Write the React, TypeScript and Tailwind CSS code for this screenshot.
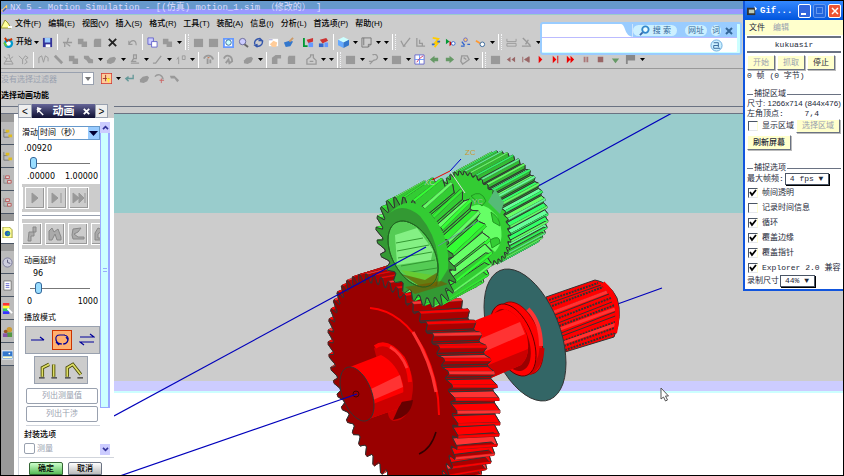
import { useState } from "react";
import type { ReactNode } from "react";

const MENUS = ["文件(F)", "编辑(E)", "视图(V)", "插入(S)", "格式(R)", "工具(T)", "装配(A)", "信息(I)", "分析(L)", "首选项(P)", "帮助(H)"];

// "|" separator, "_" small gap, "v" caret, ":" group handle, anything else is a glyph
const STANDARD_BAR = [
  "app", "开始", "v", "save", "|", "cut", "copy", "paste", "delete", "_", "undo", "|", "copyBlue", "copy", "v", ":",
  "square", "square", "fit", "zoom", "rotate", "pan", "shade", "_", "assembly", "assembly2", "|", "cube", "v", "frame", "v", "v", ":",
  "curve", "bars", "motor", "play3", "joint", "spring", "v", ":", "ruler", "angle", "v",
];

const MOTION_BAR = [
  "tree", "tree2", "|", "wave", "link", "copy", "cluster", "v", "blob", "v", "person", "v", "line", "v", "pin", "v", "|",
  "hook", "|", "arch", "_", "blob", "v", "|", "bend", "paste", "_", "house", "v", "v", ":", "square", "v", "bulb", "v",
  "square", "v", "grid", "left", "right", "ring", "v", ":", "square", "rewind", "first", "play", "next", "fast", "pause", "stop", "down", "flag", "v",
];

const G = "#999999";

const GLYPHS: Record<string, ReactNode> = {
  app: <><circle cx="6" cy="7" r="5" fill="#0099cc" /><circle cx="6" cy="7" r="2.5" fill="#ffffff" /><path d="M2 1l3 4M6 4l4-2" stroke="#cc3300" strokeWidth="2" /><path d="M1 6l3 4" stroke="#66cc33" strokeWidth="2" /></>,
  save: <><path d="M1 1h10v10H1z" fill="#333399" /><path d="M3 1h6v5H3z" fill="#99ccff" /><path d="M4 8h5v3H4z" fill="#ffffff" /></>,
  cut: <path d="M7 1L5 8M1 6h10M3 6v5M6 8l3 2" stroke={G} fill="none" strokeWidth="1.4" />,
  copy: <path d="M1 2h6v3h4v6H5V8H1z" fill={G} />,
  paste: <path d="M3 2h7v9H2V4z" fill={G} />,
  delete: <path d="M2 2l8 8M10 2l-8 8" stroke="#222222" strokeWidth="2" />,
  undo: <path d="M2 4v4h4M2 8c3-6 8-5 8 1" stroke={G} fill="none" strokeWidth="1.2" />,
  copyBlue: <><path d="M1 1h6v7H1z" fill="#ccccff" stroke="#6666cc" /><path d="M5 5h6v6H5z" fill="#ffffff" stroke="#6666cc" /></>,
  square: <path d="M1 2h10v9H1z" fill={G} />,
  fit: <><path d="M1 2h10v9H1z" fill="#ffffff" stroke="#6699ff" strokeWidth="2" /><circle cx="6" cy="6" r="3" fill="#ccffff" stroke="#336699" /></>,
  zoom: <><circle cx="5" cy="5" r="3.5" fill="#ccccff" stroke="#666699" /><path d="M7 8l4 3" stroke="#666666" strokeWidth="2" /></>,
  rotate: <path d="M2 8a4.5 4.5 0 0 1 7-5M10 4a4.5 4.5 0 0 1-7 5M7 1l3 3-4 0M5 11L2 9l3-1" stroke="#3355aa" fill="none" strokeWidth="1.5" />,
  pan: <><path d="M1 2h10v8H1z" fill="#ffffff" /><path d="M2 8l4-4 4 2-1 5H5z" fill="#ffcc99" /><path d="M1 3h4" stroke="#9999cc" /></>,
  shade: <><path d="M1 6l6-2 4 1-3 5-5 1z" fill="#3377cc" /><path d="M7 5l4-4" stroke="#cc9966" strokeWidth="2" /></>,
  assembly: <><path d="M1 1v9h4" stroke="#009933" fill="none" strokeWidth="2" /><path d="M4 3l7-2v4L6 7z" fill="#cc3333" /><path d="M6 6h5v5H6z" fill="#6699ff" /></>,
  assembly2: <><path d="M2 3l7-2 2 3-6 3z" fill="#cc3333" /><path d="M1 7h5v4H1z" fill="#3366cc" /><path d="M7 6h4v5H7z" fill="#6699ff" /></>,
  cube: <><path d="M0 3l6-3 6 3-6 3z" fill="#ccffff" /><path d="M0 3l6 3v6L0 9z" fill="#66aaff" /><path d="M12 3L6 6v6l6-3z" fill="#3377cc" /></>,
  frame: <path d="M1 1h10v7l-3 3H1zM8 11V8h3M3 1v8" fill="none" stroke="#777777" />,
  curve: <path d="M1 4l3 6 7-9M3 10h3" fill="none" stroke={G} strokeWidth="1.4" />,
  bars: <path d="M2 1v9h9M5 3v4h3v3" fill="none" stroke={G} strokeWidth="1.4" />,
  motor: <><path d="M3 1l6 1-4 5 4-1-4 5" fill="none" stroke="#ffcc00" strokeWidth="2" /><path d="M2 8h3M8 5h3" stroke="#3366cc" strokeWidth="2" /></>,
  play3: <><path d="M1 2l4 3-4 3z" fill="#009933" /><path d="M5 4l3 3-3 3z" fill="#cc0000" /><circle cx="9" cy="7" r="2" fill="#ffffff" stroke="#3366cc" /></>,
  joint: <><circle cx="6" cy="3" r="2" fill="#ffcc66" stroke="#6666cc" /><path d="M2 5l3 4M8 8h3M1 10h4" stroke="#3366cc" strokeWidth="1.5" /></>,
  spring: <><path d="M1 4l5 3" stroke="#ff9933" strokeWidth="2" /><circle cx="8" cy="8" r="2.5" fill="#ffffff" stroke="#336699" /></>,
  ruler: <path d="M1 2v3h10V2M1 7h10v3H1z" fill="none" stroke={G} />,
  angle: <path d="M2 1l8 8M1 10h10M5 8l3-5" fill="none" stroke={G} strokeWidth="1.5" />,
  tree: <path d="M5 1h2v3l4 7H1l4-7M3 8h6M1 3l3 2M11 3L8 5" fill="none" stroke={G} />,
  tree2: <path d="M1 2l4 4v5M5 6l3-4 3 2-3 2 2 3-3 2" fill="none" stroke={G} />,
  wave: <path d="M1 10V4l3-2 2 7 2-7 3 2v4" fill="none" stroke={G} />,
  link: <path d="M2 2l8 8" stroke={G} strokeWidth="3" />,
  cluster: <path d="M1 2h5l2 3 3 1v4H6L4 7 1 5z" fill={G} />,
  blob: <path d="M1 7l3-3 5-1 2 2-2 4-4 2-4-1z" fill={G} />,
  person: <path d="M5 1h3v4H5zM5 5L3 8h5M2 10h9" fill="none" stroke={G} strokeWidth="1.4" />,
  line: <path d="M1 10h3L10 2" fill="none" stroke={G} strokeWidth="1.4" />,
  pin: <path d="M4 11V4M2 6l2-3M8 2h3v4H8z" fill="none" stroke={G} />,
  hook: <><path d="M1 5c2-5 9-4 10 1M5 5v6M8 6v4" fill="none" stroke={G} strokeWidth="2" /><path d="M5 4h2" stroke="#cc6633" /></>,
  arch: <path d="M1 5c2-5 9-4 9 3l-3 2-1-4-3 4" fill="none" stroke={G} strokeWidth="2" />,
  bend: <path d="M1 4l4-3h6v4H7v6H1z" fill={G} />,
  house: <path d="M1 6l4-3V1h3v3l3 3v4H1zM4 8h4" fill="none" stroke={G} strokeWidth="1.4" />,
  bulb: <path d="M5 1a3 3 0 0 1 4 5L6 7 2 11M1 8h4" fill="none" stroke={G} strokeWidth="1.4" />,
  grid: <><path d="M1 1h10v10H1z" fill="#ffffff" stroke="#6666cc" /><path d="M1 6h10M6 1v10" stroke="#6699ff" /><path d="M3 9l3-4 4-3" stroke="#cc3366" fill="none" /></>,
  left: <path d="M1 6l5-4v2h4v4H6v2z" fill="#669966" />,
  right: <path d="M11 6L6 2v2H2v4h4v2z" fill="#669966" />,
  ring: <path d="M3 2h6l2 4-4 3-3 2-2-3zM5 4l3 2" fill="none" stroke={G} strokeWidth="1.5" />,
  rewind: <path d="M6 3v6L2 6zM11 3v6L7 6z" fill="#996666" />,
  first: <path d="M3 3v6M10 3v6L5 6z" fill="#996666" stroke="#996666" />,
  play: <path d="M4 2l4 4-4 4z" fill="#ee0000" />,
  next: <path d="M3 2l4 4-4 4zM8 2h1v8H8z" fill="#ee0000" />,
  fast: <path d="M2 2l4 4-4 4zM6 2l4 4-4 4z" fill="#ee0000" />,
  pause: <path d="M4 3h2v6H4zM7 3h2v6H7z" fill="#aa7777" />,
  stop: <path d="M3 3h6v6H3z" fill="#996666" />,
  down: <path d="M2 5h8L6 10z" fill="#669966" />,
  flag: <path d="M1 1h10v6H3v4H1z" fill="#888888" />,
  back: <path d="M10 2v4H3M5 4L2 6l3 3" fill="none" stroke="#669999" strokeWidth="1.5" />,
  cross: <><path d="M1 4c3-4 8-2 9 3" fill="none" stroke={G} strokeWidth="1.5" /><path d="M6 8h5M8 6v5" stroke="#cc6666" /></>,
  bolt: <path d="M1 3h5l5 5-2 2-3-4H2z" fill={G} />,
  select: <><path d="M0 0h12v12H0z" fill="#ffcc99" stroke="#cc3333" strokeWidth="1.5" /><path d="M2 6h7M5 2v7" stroke="#993333" /><path d="M6 5l5 2-2 1-1 3z" fill="#ffee33" /></>,
  node: <><path d="M2 1v9h6M2 5h4" fill="none" stroke="#777777" /><path d="M4 2h4v3H4zM7 7h4v3H7z" fill="#ddbb22" /></>,
  nodeRed: <><path d="M2 1v9h6M2 5h4" fill="none" stroke="#888888" /><path d="M4 2h4v3H4zM6 7h4v3H6z" fill="#dddddd" stroke="#bb5555" /></>,
  world: <><path d="M1 0h7l3 3v9H1z" fill="#ffff99" stroke="#999933" /><circle cx="6" cy="7" r="3" fill="#2266bb" /><circle cx="7" cy="7" r="1.3" fill="#33aa66" /></>,
  clock: <><circle cx="6" cy="6" r="5" fill="#ccccdd" stroke="#777799" /><path d="M6 3v3l3 1" fill="none" stroke="#555577" /></>,
  list: <><path d="M2 1h8v10H2z" fill="#ffffff" stroke="#777777" /><path d="M4 4h4M4 6h4M4 8h4" stroke="#6666cc" /></>,
  rainbow: <><path d="M1 0h7v3H1z" fill="#ff3333" /><path d="M1 3h7v3H1z" fill="#ffff33" /><path d="M1 6h7v3H1z" fill="#33cc66" /><path d="M1 9h7v3H1z" fill="#3333ff" /><path d="M6 6l5 5" stroke="#ffffff" strokeWidth="2" /></>,
  people: <><circle cx="8" cy="4" r="3" fill="#cc9933" /><path d="M5 7h6v5H5z" fill="#559944" /><circle cx="4" cy="6" r="2" fill="#995522" /><path d="M1 8h5v4H1z" fill="#8855aa" /></>,
  photo: <><path d="M0 2h12v9H0z" fill="#3377cc" stroke="#ffffff" /><path d="M1 8h10v2H1z" fill="#ffffcc" /><circle cx="8" cy="5" r="1" fill="#ffffff" /></>,
};

function Glyph({ name }: { name: string }) {
  return <svg viewBox="0 0 12 12" className="h-[11px] w-[11px]" aria-hidden="true">{GLYPHS[name]}</svg>;
}

function Toolbar({ items, height }: { items: string[]; height: string }) {
  return (
    <div className={`flex items-center overflow-hidden ${height}`}>
      {items.map((it, i) => {
        if (it === "|") return <span key={i} className="flex w-[5px] shrink-0 justify-center"><i className="h-4 w-px bg-white" /></span>;
        if (it === "_") return <span key={i} className="w-[5px] shrink-0" />;
        if (it === ":") {
          return (
            <span key={i} className="flex w-2 shrink-0 justify-center gap-0.5">
              <i className="h-4 w-px bg-white" />
              <i className="h-4 border-l border-dotted border-gray-100" />
            </span>
          );
        }
        if (it === "v") {
          return (
            <span key={i} className="flex w-2 shrink-0 justify-center">
              <svg viewBox="0 0 5 3" className="h-[3px] w-[5px]"><path d="M0 0h5L2.5 3z" fill="#000" /></svg>
            </span>
          );
        }
        if (it === "开始") return <button key={i} className="w-4 shrink-0 whitespace-nowrap text-[8px] font-medium">{it}</button>;
        return <button key={i} aria-label={it} className="flex w-[15px] shrink-0 justify-center"><Glyph name={it} /></button>;
      })}
    </div>
  );
}

type Rim = { cx: number; cy: number; x: number; y: number };

// A circle seen in perspective: every disc in the scene shares the same tilt
const TILT = 1.13;
function at(r: Rim, t: number, k = 1): [number, number] {
  return [r.cx + r.x * k * Math.cos(t), r.cy + r.y * k * Math.cos(t - TILT)];
}
function toPoints(list: [number, number][]) {
  return list.map(([a, b]) => `${a.toFixed(1)},${b.toFixed(1)}`).join(" ");
}
function disc(r: Rim, k = 1) {
  const list: [number, number][] = [];
  for (let i = 0; i <= 48; i++) list.push(at(r, (Math.PI * 2 * i) / 48, k));
  return toPoints(list);
}

function Gear({ rim, depth, n, twist, root, face, lands, flank }: {
  rim: Rim; depth: [number, number]; n: number; twist: number; root: number; face: string; lands: string[]; flank: string;
}) {
  const back = { ...rim, cx: rim.cx + depth[0], cy: rim.cy + depth[1] };
  const step = (Math.PI * 2) / n;
  const profile = (r: Rim, off: number) => {
    const list: [number, number][] = [];
    for (let i = 0; i < n; i++) {
      const t = i * step + off;
      list.push(at(r, t, root), at(r, t + step * 0.4), at(r, t + step * 0.6), at(r, t + step * 0.8, root));
    }
    return toPoints(list);
  };
  // start on the far side so that nearer teeth are painted last
  const order = Array.from({ length: n }, (_, i) => i).sort((a, b) => Math.cos(a * step) - Math.cos(b * step));
  return (
    <g stroke="#333333" strokeWidth="1" strokeLinejoin="round">
      <polygon points={profile(back, twist)} fill={flank} />
      {order.map((i) => {
        const t = i * step;
        const quad = (a: number, ka: number, b: number, kb: number) =>
          toPoints([at(rim, t + a, ka), at(rim, t + b, kb), at(back, t + b + twist, kb), at(back, t + a + twist, ka)]);
        const land = lands[i % lands.length];
        return (
          <g key={i}>
            <polygon points={quad(step * 0.8, root, step, root)} fill={flank} />
            <polygon points={quad(0, root, step * 0.4, 1)} fill={lands[(i + 1) % lands.length]} />
            <polygon points={quad(step * 0.6, 1, step * 0.8, root)} fill={flank} />
            <polygon points={quad(step * 0.4, 1, step * 0.6, 1)} fill={land} stroke={land} strokeWidth="0.6" />
          </g>
        );
      })}
      <polygon points={profile(rim, 0)} fill={face} />
    </g>
  );
}

const RED: Rim = { cx: 392, cy: 384, x: 65, y: 110 };
const PINION: Rim = { cx: 415, cy: 252, x: 40, y: 55 };
const SPLINE: Rim = { cx: 475, cy: 218, x: 35, y: 47 };
const BORE: Rim = { cx: 412, cy: 254, x: 25, y: 33 };
const FLANGE: Rim = { cx: 524, cy: 335, x: 41, y: 66 };
const COLLAR: Rim = { cx: 512, cy: 340, x: 23, y: 36 };
const HUB: Rim = { cx: 356, cy: 394, x: 17, y: 27 };

function Scene() {
  return (
    <svg viewBox="113 114 730 361" preserveAspectRatio="xMinYMin slice" className="block h-full w-full" aria-label="Gear assembly">
      <rect x="113" y="114" width="1400" height="100" fill="#99cccc" />
      <rect x="113" y="213" width="1400" height="168" fill="#cccccc" />
      <rect x="113" y="381" width="1400" height="10" fill="#ccccff" />
      <rect x="113" y="391" width="1400" height="2" fill="#ccffff" />
      <rect x="113" y="393" width="1400" height="900" fill="#ffffff" />

      <path d="M671 113L530 190M661 288L600 310" stroke="#0000bb" strokeWidth="1.2" />

      {/* output shaft */}
      <path d="M545 297L594 280Q608 282 616 298Q622 316 613 337L564 352Z" fill="#ff0000" stroke="#333333" />
      <g stroke="#333333" strokeWidth="1">
        <path d="M548 300L597 283M551 306L602 287M555 319L610 298M558 326L614 305M562 341L617 321M563 346L616 327M564 350L614 333" strokeDasharray="2 1" strokeWidth="2" />
        <path d="M549 303L600 285M553 311L606 291M554 315L608 294M557 323L611 302M560 333L616 311M561 336L617 315" />
      </g>
      <path d="M553 312L606 292M559 329L614 309M562 343L616 324" stroke="#ff3333" strokeWidth="3" />
      <path d="M602 283Q622 300 614 333" fill="none" stroke="#ff0000" strokeWidth="4" />
      <polygon points={disc(FLANGE)} fill="#336666" stroke="#333333" />
      <polygon points={disc({ ...COLLAR, cx: 519, cy: 338 })} fill="#ff0000" stroke="#990000" />
      <path d="M527 309Q540 322 540 346" fill="none" stroke="#ff3333" strokeWidth="4" />
      <path d="M541 348Q540 365 528 373" fill="none" stroke="#cc0000" strokeWidth="5" />
      <polygon points={disc(COLLAR)} fill="#ff0000" stroke="#660000" />
      <polygon points={disc({ ...COLLAR, cx: 510 }, 0.86)} fill="#990000" />
      <path d="M470 322L504 309Q520 315 526 336Q530 356 520 365L490 378L470 378Z" fill="#ff0000" />
      <path d="M474 341L519 322L524 334L478 354Z" fill="#ff3333" />
      <path d="M485 366L527 349Q527 358 520 365L490 378Z" fill="#cc0000" />

      <Gear rim={RED} depth={[42, -13]} n={52} twist={0.12} root={0.92} face="#990000" lands={["#ff0000", "#ff0000", "#ff3333"]} flank="#aa0000" />
      <path d="M369 308Q402 311 423 350Q438 382 438 415" fill="none" stroke="#ff0000" strokeWidth="2" />
      <path d="M412 332Q430 362 435 392" fill="none" stroke="#ff3333" strokeWidth="3" />
      <path d="M435 432Q430 449 418 454" fill="none" stroke="#330000" strokeWidth="1.5" />
      <path d="M373 348Q386 338 403 358Q415 376 411 396Q408 421 393 421Q385 420 387 402Z" fill="#cc0000" />
      <path d="M374 347Q386 338 402 358Q408 368 409 382" fill="none" stroke="#ff0000" strokeWidth="4" />
      <path d="M389 347Q400 353 406 368" fill="none" stroke="#ff3333" strokeWidth="3" />
      <path d="M392 420Q410 417 412 400L400 402Z" fill="#660000" />
      <path d="M349 367L380 355Q396 363 402 384Q404 398 396 409L362 421Z" fill="#ff0000" />
      <path d="M370 389L399 375L402 387L372 400Z" fill="#ff3333" />
      <path d="M372 404L403 392Q403 402 396 409L362 421Z" fill="#cc0000" />
      <polygon points={disc(HUB)} fill="#990000" stroke="#333333" />
      <circle cx="355" cy="394" r="3" fill="none" stroke="#440000" />
      <path d="M113 478L356 394" stroke="#0000bb" strokeWidth="1.2" />

      <Gear rim={SPLINE} depth={[37, -20]} n={38} twist={0} root={0.92} face="#33cc33" lands={["#66ff66", "#33ff66", "#66ff99"]} flank="#33bb33" />
      <path d="M463 213Q478 195 496 216Q506 238 494 252L480 240Z" fill="#66ff66" />
      <g fill="#33cc33" stroke="#229922">
        <path d="M470 196q10-7 15 5l-4 5z" />
        <path d="M490 212q9 6 9 14l-7-4z" />
        <path d="M489 240q10-6 10 3l-8 5z" />
      </g>
      <path d="M494 189L503 203L499 214L487 202Z" fill="#55bb77" />
      <Gear rim={PINION} depth={[36, -19]} n={25} twist={-0.2} root={0.84} face="#339933" lands={["#33ff33", "#66ff66", "#33ee33"]} flank="#33cc33" />
      <path d="M386 216Q400 200 419 216Q442 243 437 285L447 269Q450 229 422 207Q403 195 386 216Z" fill="#33cc33" />
      <polygon points={disc(BORE)} fill="#55cc55" stroke="#226622" />
      <path d="M394 235L416 228L432 250L430 260L396 265Z" fill="#99ff99" opacity=".7" />
      <path d="M396 251L428 245M397 258L431 252M400 266L434 260M404 273L436 268M395 243L422 238" stroke="#339933" />
      <path d="M400 270L437 276L434 286L416 285Z" fill="#66cc33" />
      <path d="M400 274L424 280L437 272L436 286L420 287Z" fill="#665500" opacity=".65" />
      <path d="M404 287L440 281L447 284L414 294Z" fill="#775500" opacity=".6" />
      <polygon points={disc(BORE)} fill="none" stroke="#226622" />
      <path d="M437 246L478 221" stroke="#669999" />
      <path d="M113 416L425 247" stroke="#0000bb" strokeWidth="1.2" />

      <path d="M449 171L464 193" stroke="#dddddd" />
      <path d="M449 171L431 180" stroke="#ee0000" />
      <path d="M449 171L460 159" stroke="#0000cc" />
      <g fontFamily="Liberation Sans, sans-serif" fontSize="8">
        <text x="464" y="155" fill="#cc9933">ZC</text>
        <text x="471" y="204" fill="#99bb99">YC</text>
        <text x="423" y="185" fill="#bbccbb">XC</text>
      </g>
      <path d="M660 388v11l2.500-2 2 4 2-1-2-4h3z" fill="#ffffff" stroke="#555555" />
    </svg>
  );
}

const TABS = [["node", "node", "nodeRed", "nodeRed"], ["world"], ["clock", "list", "rainbow", "people", "photo"]];

const SLIDER =
  "h-3 shrink-0 appearance-none bg-[linear-gradient(#777,#777)] bg-[length:100%_1px] bg-center bg-no-repeat [&::-webkit-slider-thumb]:h-3 [&::-webkit-slider-thumb]:w-[7px] [&::-webkit-slider-thumb]:appearance-none [&::-webkit-slider-thumb]:rounded-[3px] [&::-webkit-slider-thumb]:border [&::-webkit-slider-thumb]:border-[#336699] [&::-webkit-slider-thumb]:bg-[#99ddff]";

const KEY = "flex h-[22px] w-5 shrink-0 items-center justify-center border border-white bg-[#cccccc] shadow-[inset_-1px_-1px_0_#999]";

function AnimationPanel() {
  const [mode, setMode] = useState("loop");
  return (
    <aside className="flex w-24 shrink-0 flex-col">
      <header className="flex h-[14px] w-[90px] items-center bg-gradient-to-b from-[#666699] to-[#111133] text-white">
        <button className="h-full w-[14px] border border-gray-400 bg-[#eeeeee] text-[10px] leading-[11px] text-black">&lt;</button>
        <svg viewBox="0 0 10 10" className="ml-1 h-[9px] w-[9px]"><path d="M1 2l7 7M2 1l3 1-3 3z" stroke="#fff" strokeWidth="1.5" /></svg>
        <h2 className="flex-1 text-center text-[11px] font-bold leading-none">动画</h2>
        <button aria-label="关闭" className="mr-1 flex h-[9px] w-[9px]"><svg viewBox="0 0 10 10"><path d="M2 2l6 6M8 2l-6 6" stroke="#fff" strokeWidth="2" /></svg></button>
        <button className="h-full w-[13px] border border-gray-400 bg-[#eeeeee] text-[10px] leading-[11px] text-black">&gt;</button>
      </header>
      <div className="flex min-h-0 flex-1 border-l border-gray-300 bg-white pt-1">
        <div className="flex min-w-0 flex-1 flex-col overflow-hidden pl-[3px] text-[8px] leading-[10px]">
          <label className="mt-1 flex h-[14px] items-center">
            <span className="w-4 whitespace-nowrap">滑动</span>
            <span className="relative flex-1">
              <select className="h-[14px] w-full appearance-none border border-[#6699cc] bg-white pl-px text-[8px] leading-[10px]"><option>时间（秒）</option></select>
              <svg viewBox="0 0 11 12" className="pointer-events-none absolute right-px top-px h-3 w-[11px] bg-[#99ccff]"><path d="M1 4h9L5.500 9z" fill="#000033" /></svg>
            </span>
          </label>
          <div className="mt-1 pl-[2px] font-[DejaVu_Sans]">.00920</div>
          <input aria-label="滑动" type="range" defaultValue="0" className={`ml-2 mt-[3px] w-[60px] ${SLIDER}`} />
          <div className="mt-[3px] flex justify-between pl-[5px] pr-[2px] font-[DejaVu_Sans]"><span>.00000</span><span>1.00000</span></div>
          <div className="mt-[2px] flex h-7 shrink-0 items-center gap-[2px] bg-[#cccccc]">
            <span className="h-[22px] w-px bg-white" />
            {["M5 3l6 5-6 5z", "M3 3l6 5-6 5zM12 3v10", "M2 3l6 5-6 5zM8 3l5 5-5 5zM14 3v10"].map((d) => (
              <button key={d} aria-label="播放" className={KEY}><svg viewBox="0 0 16 16" className="h-4 w-4"><path d={d} fill="#999999" stroke="#999999" /></svg></button>
            ))}
          </div>
          <hr className="mt-[3px] border-gray-400" />
          <div className="mt-[3px] flex h-[30px] shrink-0 items-center gap-[3px] overflow-hidden bg-[#cccccc]">
            {["M9 1h3v5H9zM5 6h5v4H7v5H4z", "M2 14V5l3-3 2 4 4-3 3 8v3h-4L8 8l-3 6z", "M3 3l8-1-3 4-4 2 4 3h6v2H3l-1-4z", "M5 2l5 2-5 4v4h8v2H2V7z"].map((d) => (
              <button key={d} aria-label="工具" className={KEY}><svg viewBox="0 0 16 16" className="h-4 w-4"><path d={d} fill="#aaaaaa" stroke="#888888" /></svg></button>
            ))}
          </div>
          <div className="mt-[7px] pl-[2px]">动画延时</div>
          <div className="mt-[3px] pl-[11px] font-[DejaVu_Sans]">96</div>
          <input aria-label="动画延时" type="range" min="0" max="1000" defaultValue="96" className={`ml-2 mt-[3px] w-[60px] ${SLIDER}`} />
          <div className="mt-[3px] flex justify-between pl-[5px] pr-[2px] font-[DejaVu_Sans]"><span>0</span><span>1000</span></div>
          <div className="mt-[6px] pl-[2px]">播放模式</div>
          <div className="ml-[3px] mt-[3px] flex h-7 shrink-0 items-center justify-around border border-gray-400 bg-[#cccccc]">
            {[["once", "M1 8h13M10 5l4 3"], ["loop", "M6 3Q1 3 2 8Q3 12 8 12M10 3Q15 4 14 8Q13 12 9 12M6 3h5M12 5l2 3M2 10l3 3"], ["bounce", "M1 5h14l-4-3M15 10H1l4 3"]].map(([id, d]) => (
              <button
                key={id}
                aria-label={id}
                onClick={() => setMode(id)}
                className={`flex h-5 w-5 items-center justify-center border ${mode === id ? "border-[#cc3300] bg-[#ffb070]" : "border-transparent"}`}
              >
                <svg viewBox="0 0 16 16" className="h-4 w-4"><path d={d} fill="none" stroke="#000099" strokeWidth="1.200" /></svg>
              </button>
            ))}
          </div>
          <div className="mx-3 mt-[2px] flex h-7 shrink-0 items-center justify-around border border-gray-400 bg-[#cccccc]">
            {["M3 14V6l6-3M13 14V3", "M2 14V6l5-3 7 9"].map((d) => (
              <button key={d} aria-label="连杆">
                <svg viewBox="0 0 16 16" className="h-[18px] w-[18px]"><path d={d} fill="none" stroke="#444400" strokeWidth="3" /><path d={d} fill="none" stroke="#dddd66" strokeWidth="1.500" /><path d="M0 15h5M11 15h5" stroke="#333333" /></svg>
              </button>
            ))}
          </div>
          <button disabled className="ml-1 mr-[2px] mt-1 h-4 shrink-0 rounded-[2px] border border-gray-400 text-gray-400">列出测量值</button>
          <button disabled className="ml-1 mr-[2px] mt-[2px] h-4 shrink-0 rounded-[2px] border border-gray-400 text-gray-400">列出干涉</button>
          <hr className="ml-1 mt-[3px] border-gray-300" />
          <div className="mt-1 pl-[2px] font-medium">封装选项</div>
          <label className="mt-[3px] flex items-center gap-[2px] pl-[2px] text-gray-400">
            <input type="checkbox" disabled className="h-[11px] w-[11px] appearance-none rounded-[2px] border border-gray-400" />测量
          </label>
        </div>
        <div className="mr-1 flex w-[10px] shrink-0 flex-col items-center text-[#333399]">
          <button aria-label="向上" className="flex h-[11px] w-full items-center justify-center bg-[#ccccff]"><svg viewBox="0 0 8 6" className="h-[5px] w-[7px]"><path d="M1 5l3-3 3 3" fill="none" stroke="currentColor" strokeWidth="2" /></svg></button>
          <div className="flex h-[275px] w-full shrink-0 items-center justify-center border-x border-b border-r-2 border-[#99aaff] bg-[#ccffff]"><i className="h-1 w-1 border-y border-[#99aaff]" /></div>
          <div className="min-h-0 flex-1 bg-white" />
          <button aria-label="向下" className="mb-[2px] flex h-[11px] w-full items-center justify-center bg-[#ccccff]"><svg viewBox="0 0 8 6" className="h-[5px] w-[7px]"><path d="M1 1l3 3 3-3" fill="none" stroke="currentColor" strokeWidth="2" /></svg></button>
        </div>
      </div>
      <footer className="flex h-[18px] shrink-0 gap-[5px] border-l border-t border-gray-300 bg-white pl-[10px] pt-1 text-[8px] font-medium leading-3">
        <button className="w-[34px] rounded-t-[2px] border border-[#336633] bg-gradient-to-b from-[#ccffcc] to-[#55bb55]">确定</button>
        <button className="w-[34px] rounded-t-[2px] border border-gray-500 bg-gradient-to-b from-white to-[#bbbbbb]">取消</button>
      </footer>
    </aside>
  );
}

function SearchBar() {
  return (
    <form className="absolute right-[101px] top-[21px] flex h-[33px] w-[202px] flex-col rounded-[3px] border-2 border-[#99ccff] bg-white pb-px pr-[3px] text-[8px] text-[#336699] shadow-[inset_-3px_-1px_0_#ccffff]">
      <div className="flex h-[14px] shrink-0 items-center border-b border-[#bbbbff]">
        <input aria-label="搜索" className="h-full min-w-0 flex-1 bg-transparent outline-none" />
        <svg viewBox="0 0 14 14" className="h-full w-[14px]"><path d="M0 0h14v14Q8 13 6 6T0 0z" fill="#99ccff" /></svg>
        <div className="flex h-full items-center gap-1 whitespace-nowrap bg-[#99ccff]">
          <button type="button" className="mr-1 flex h-[11px] items-center rounded-full bg-[#ccf0ff] px-[6px]">
            <svg viewBox="0 0 12 12" className="mr-[3px] h-[11px] w-[11px]"><circle cx="7" cy="5" r="3.500" fill="#eeffff" stroke="#3388cc" strokeWidth="2" /><path d="M4 8l-3 3" stroke="#3366aa" strokeWidth="2" /></svg>
            搜 索
          </button>
          <button type="button" className="h-[11px] rounded-full bg-[#ccf0ff] px-[3px] leading-[11px]">网址</button>
          <button type="button" className="h-[11px] rounded-full bg-[#ccf0ff] px-px leading-[11px]">词</button>
          <button type="button" aria-label="关闭" className="mr-1"><svg viewBox="0 0 8 8" className="h-2 w-2"><path d="M1 1l6 6M7 1L1 7" stroke="#336699" strokeWidth="2" /></svg></button>
        </div>
      </div>
      <div className="flex flex-1 items-center justify-end pr-[14px]">
        <button type="button" aria-label="查询"><svg viewBox="0 0 14 14" className="h-[13px] w-[13px]"><circle cx="7" cy="7" r="6" fill="#ccf0ff" stroke="#66aadd" /><path d="M4 4h5v5M4 7h5M4 10h7M4 7v3" fill="none" stroke="#336699" /></svg></button>
      </div>
    </form>
  );
}

const OPTIONS = [
  { label: "帧间透明", on: true },
  { label: "记录时间信息", on: false },
  { label: "循环", on: true },
  { label: "覆盖边缘", on: true },
  { label: "覆盖指针", on: true },
  { label: "Explorer 2.0 兼容", on: true },
];

function Check({ label, on }: { label: string; on: boolean }) {
  const [checked, setChecked] = useState(on);
  return (
    <label className="flex h-[15px] items-center gap-1 whitespace-nowrap pl-px">
      <span className="relative flex h-[10px] w-[10px]">
        <input type="checkbox" checked={checked} onChange={(e) => setChecked(e.target.checked)} className="h-full w-full appearance-none border border-l-gray-600 border-t-gray-600 border-b-gray-200 border-r-[#ffffcc] bg-white" />
        {checked && <svg viewBox="0 0 10 10" className="pointer-events-none absolute inset-0"><path d="M2 4l2 3 4-5" fill="none" stroke="#000" strokeWidth="1.800" /></svg>}
      </span>
      {label}
    </label>
  );
}

function Legend({ children }: { children: ReactNode }) {
  return (
    <div className="flex h-[10px] items-center gap-px whitespace-nowrap">
      <i className="h-px w-[6px] bg-gray-500" />{children}<i className="mr-[2px] h-px flex-1 bg-gray-500" />
    </div>
  );
}

const RAISED = "border border-l-white border-t-white border-b-gray-500 border-r-gray-500 bg-[#ffffcc] shadow-[1px_1px_0_#bbb]";
const COMBO = "h-3 appearance-none border border-gray-600 bg-white px-1 text-[8px] leading-[10px] shadow-[1px_1px_0_#000]";

function GifWindow() {
  return (
    <section className="absolute right-0 top-0 flex w-[100px] flex-col border-b-2 border-l-2 border-[#1155dd] bg-white font-['Liberation_Mono','Noto_Sans_CJK_SC',monospace] text-[8px] leading-[10px] text-gray-800">
      <header className="flex h-[19px] items-center gap-[2px] bg-gradient-to-b from-[#3388ff] to-[#0055dd] px-[2px] text-white">
        <svg viewBox="0 0 12 12" className="h-[11px] w-[11px]"><path d="M0 3h9v8H0z" fill="#333333" /><path d="M2 5h6v4H2z" fill="#bbccbb" /><path d="M8 1l3 3-2 2z" fill="#ffffff" /></svg>
        <h1 className="flex-1 text-[9px] font-bold">Gif...</h1>
        <button aria-label="最小化" className="flex h-[14px] w-[13px] items-end rounded-[2px] border border-white bg-[#3366dd] p-[2px]"><i className="h-[2px] w-[5px] bg-white" /></button>
        <button aria-label="最大化" className="flex h-[14px] w-[13px] items-center justify-center rounded-[2px] border border-[#6699ee] bg-[#2266dd]"><i className="h-[7px] w-[7px] border border-[#6699ee]" /></button>
        <button aria-label="关闭" className="flex h-[14px] w-[13px] items-center justify-center rounded-[2px] border border-white bg-[#ee5533]"><svg viewBox="0 0 8 8" className="h-2 w-2"><path d="M1 1l6 6M7 1L1 7" stroke="#fff" strokeWidth="1.500" /></svg></button>
      </header>
      <nav className="flex h-[15px] items-center gap-2 bg-[#ffffcc] px-1">
        <button>文件</button>
        <button className="text-gray-400">编辑</button>
      </nav>
      <div className="flex flex-col pl-[2px]">
        <div className="mr-[2px] mt-px flex h-[17px] items-center justify-center border-y-2 border-gray-500">kukuasir</div>
        <div className="mt-[2px] flex h-[15px] gap-[2px]">
          <button disabled className={`w-7 text-gray-400 ${RAISED}`}>开始</button>
          <button disabled className={`w-7 text-gray-400 ${RAISED}`}>抓取</button>
          <button className={`w-7 ${RAISED}`}>停止</button>
        </div>
        <div className="mt-px whitespace-pre">0 帧 (0 字节)</div>
        <div className="mt-2"><Legend>捕捉区域</Legend></div>
        <div className="whitespace-pre font-['Liberation_Sans','Noto_Sans_CJK_SC',sans-serif]">尺寸: 1266x714 (844x476)</div>
        <div className="flex justify-between pr-6"><span>左角顶点:</span><span>7,4</span></div>
        <div className="flex h-[14px] items-center justify-between pr-[3px]">
          <Check label="显示区域" on={false} />
          <button disabled className={`h-[14px] w-[44px] text-gray-400 ${RAISED}`}>选择区域</button>
        </div>
        <button className={`mt-[2px] h-[15px] w-11 font-medium ${RAISED}`}>刷新屏幕</button>
        <div className="mt-[13px]"><Legend>捕捉选项</Legend></div>
        <label className="flex h-3 items-center gap-px whitespace-nowrap">最大帧频:<select className={COMBO}><option>4 fps ▼</option></select></label>
        <div className="flex flex-col">
          {OPTIONS.map((o) => <Check key={o.label} label={o.label} on={o.on} />)}
        </div>
        <label className="mb-[2px] flex h-3 items-center gap-px whitespace-nowrap">录制尺寸<select className={COMBO}><option>44% ▼</option></select></label>
      </div>
    </section>
  );
}

export default function App() {
  return (
    <div className="relative flex h-screen flex-col overflow-hidden border border-black bg-[#cccccc] font-['Liberation_Sans','Noto_Sans_CJK_SC',sans-serif] text-black">
      <header className="flex h-[14px] shrink-0 items-center gap-[2px] border-b border-[#99cccc] bg-[linear-gradient(#6699cc_8px,#9999ff_8px)] font-['Liberation_Mono','Noto_Sans_CJK_SC',monospace] text-[9px] text-[#ddddff]">
        <svg viewBox="0 0 8 10" className="h-[10px] w-[7px]"><path d="M0 8l7-7v5l-5 4z" fill="#ffcc66" /><path d="M2 9l4-4" stroke="#3366cc" strokeWidth="2" /></svg>
        <h1 className="whitespace-pre leading-[10px]">NX 5 - Motion Simulation - [(仿真) motion_1.sim （修改的） ]</h1>
      </header>
      <nav className="flex h-[18px] shrink-0 items-center gap-[7px] text-[8px] font-medium">
        <span className="-mr-1 flex w-[11px] items-center">
          <svg viewBox="0 0 11 11" className="h-[11px] w-[11px]"><path d="M0 9l4-8 3 3 3 5z" fill="#ffff99" stroke="#999933" /><path d="M7 8h4" stroke="#ffffff" strokeWidth="2" /></svg>
        </span>
        {MENUS.map((m) => <button key={m} className="whitespace-nowrap">{m}</button>)}
      </nav>
      <Toolbar items={STANDARD_BAR} height="h-[18px] shrink-0" />
      <Toolbar items={MOTION_BAR} height="h-[18px] shrink-0 border-b border-[#999999]" />
      <div className="flex h-[19px] shrink-0 items-center">
        <select aria-label="选择过滤器" disabled className="h-[13px] w-[81px] appearance-none border-t border-gray-400 bg-[#cccccc] text-[8px] leading-[11px] text-gray-400 opacity-100"><option>没有选择过滤器</option></select>
        <span className="flex h-[13px] w-3 items-center justify-center border border-gray-400 bg-white"><svg viewBox="0 0 6 4" className="h-1 w-[6px]"><path d="M0 0h6L3 4z" fill="#777" /></svg></span>
        <Toolbar items={["_", "select", "v", "back", "blob", "cross", "bolt"]} height="h-[15px]" />
      </div>
      <p className="h-4 shrink-0 text-[8px] font-bold leading-[15px]">选择动画功能</p>
      <main className="flex min-h-0 flex-1">
        <div className="flex w-[17px] shrink-0 flex-col">
          <div className="mt-[2px] h-2 shrink-0 border-y border-gray-500" />
          <div className="flex min-h-0 flex-1 flex-col gap-[7px] border-r-4 border-white bg-[#999999] pt-2">
            {TABS.map((group, g) => (
              <div key={g} className="flex flex-col">
                {group.map((t, i) => (
                  <button key={i} aria-label={t} className={`flex h-[23px] items-center justify-center border-b border-gray-600 ${t === "world" ? "bg-white" : "bg-[#bbbbbb]"}`}>
                    <Glyph name={t} />
                  </button>
                ))}
              </div>
            ))}
          </div>
        </div>
        <AnimationPanel />
        <div className="flex min-w-0 flex-1 flex-col">
          <div className="mt-[2px] h-2 shrink-0 border-y border-gray-500" />
          <div className="min-h-0 flex-1"><Scene /></div>
        </div>
      </main>
      <SearchBar />
      <GifWindow />
    </div>
  );
}
